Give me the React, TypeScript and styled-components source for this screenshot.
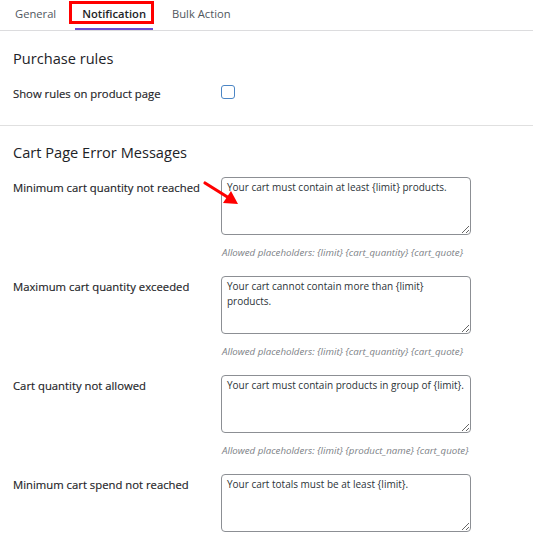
import React from 'react';
import styled, { createGlobalStyle } from 'styled-components';

const GlobalStyle = createGlobalStyle`
  body {
    margin: 0;
    background: #fff;
    font-family: "Open Sans", "Noto Sans", Arial, sans-serif;
    color: #1d2327;
  }
`;

const Page = styled.div`
  width: 533px;
`;

const TabBar = styled.div`
  display: flex;
  height: 30px;
  padding-left: 2px;
  border-bottom: 1px solid #dcdcde;
`;

const Tab = styled.div<{ $active?: boolean }>`
  position: relative;
  display: flex;
  align-items: center;
  padding: 0 13px 4px;
  font-size: 11.2px;
  color: ${({ $active }) => ($active ? '#1d2327' : '#50575e')};
  font-weight: ${({ $active }) => ($active ? 600 : 400)};

  ${({ $active }) =>
    $active &&
    `
    &::after {
      content: '';
      position: absolute;
      left: 6px;
      right: 6px;
      bottom: 0;
      height: 2px;
      background: #6a4bd3;
    }
  `}
`;

const Highlight = styled.span`
  position: absolute;
  left: 0;
  right: 5px;
  top: 1px;
  height: 23px;
  border: 3px solid #f00;
  box-sizing: border-box;
`;

const Section = styled.section<{ $divider?: boolean }>`
  padding: ${({ $divider }) => ($divider ? '16px 13px 22px' : '15px 13px 22px')};
  border-bottom: ${({ $divider }) => ($divider ? '1px solid #e0e0e0' : 'none')};
`;

const Heading = styled.h2`
  margin: 0 0 14px;
  font-size: 14.6px;
  line-height: 22px;
  font-weight: 500;
  color: #1d2327;
`;

const Row = styled.div`
  position: relative;
  display: grid;
  grid-template-columns: 208px 250px;
  align-items: start;
`;

const Label = styled.div`
  font-size: 11.3px;
  line-height: 18px;
  padding-top: 2px;
  font-weight: 500;
  color: #1d2327;
  -webkit-text-stroke: 0.15px #1d2327;
`;

const Checkbox = styled.span`
  display: block;
  width: 12px;
  height: 12px;
  margin-top: 2px;
  border: 1.5px solid #4c86c5;
  border-radius: 3px;
`;

const Field = styled.div`
  display: flex;
  flex-direction: column;
`;

const TextArea = styled.textarea`
  box-sizing: border-box;
  width: 250px;
  height: 58px;
  margin: 0;
  padding: 2px 5px;
  border: 1px solid #8c8f94;
  border-radius: 4px;
  font-family: "Open Sans", "Noto Sans", Arial, sans-serif;
  font-size: 10px;
  line-height: 15px;
  color: #2c3338;
  resize: vertical;
  outline: none;
`;

const Hint = styled.p`
  margin: 11px 0 16px 1px;
  font-size: 9.7px;
  line-height: 14px;
  font-style: italic;
  color: #7c8186;
`;

const Arrow = styled.svg`
  position: absolute;
  left: 177px;
  top: 2px;
  pointer-events: none;
`;

const messages = [
  {
    label: 'Minimum cart quantity not reached',
    text: 'Your cart must contain at least {limit} products.',
    hint: 'Allowed placeholders: {limit} {cart_quantity} {cart_quote}',
    arrow: true,
  },
  {
    label: 'Maximum cart quantity exceeded',
    text: 'Your cart cannot contain more than {limit} products.',
    hint: 'Allowed placeholders: {limit} {cart_quantity} {cart_quote}',
  },
  {
    label: 'Cart quantity not allowed',
    text: 'Your cart must contain products in group of {limit}.',
    hint: 'Allowed placeholders: {limit} {product_name} {cart_quote}',
  },
  {
    label: 'Minimum cart spend not reached',
    text: 'Your cart totals must be at least {limit}.',
    hint: '',
  },
];

const App: React.FC = () => {
  return (
    <Page>
      <GlobalStyle />
      <TabBar>
        <Tab>General</Tab>
        <Tab $active>
          Notification
          <Highlight />
        </Tab>
        <Tab>Bulk Action</Tab>
      </TabBar>

      <Section $divider>
        <Heading>Purchase rules</Heading>
        <Row>
          <Label>Show rules on product page</Label>
          <Checkbox />
        </Row>
      </Section>

      <Section>
        <Heading>Cart Page Error Messages</Heading>
        {messages.map((m) => (
          <Row key={m.label}>
            <Label>{m.label}</Label>
            <Field>
              <TextArea defaultValue={m.text} />
              {m.hint && <Hint>{m.hint}</Hint>}
            </Field>
            {m.arrow && (
              <Arrow width="52" height="34" viewBox="0 0 52 34">
                <line x1="15" y1="4" x2="39" y2="19" stroke="#f00" strokeWidth="3.2" strokeLinecap="round" />
                <polygon points="48,25 33,24 41,12" fill="#f00" />
              </Arrow>
            )}
          </Row>
        ))}
      </Section>
    </Page>
  );
};

export default App;
